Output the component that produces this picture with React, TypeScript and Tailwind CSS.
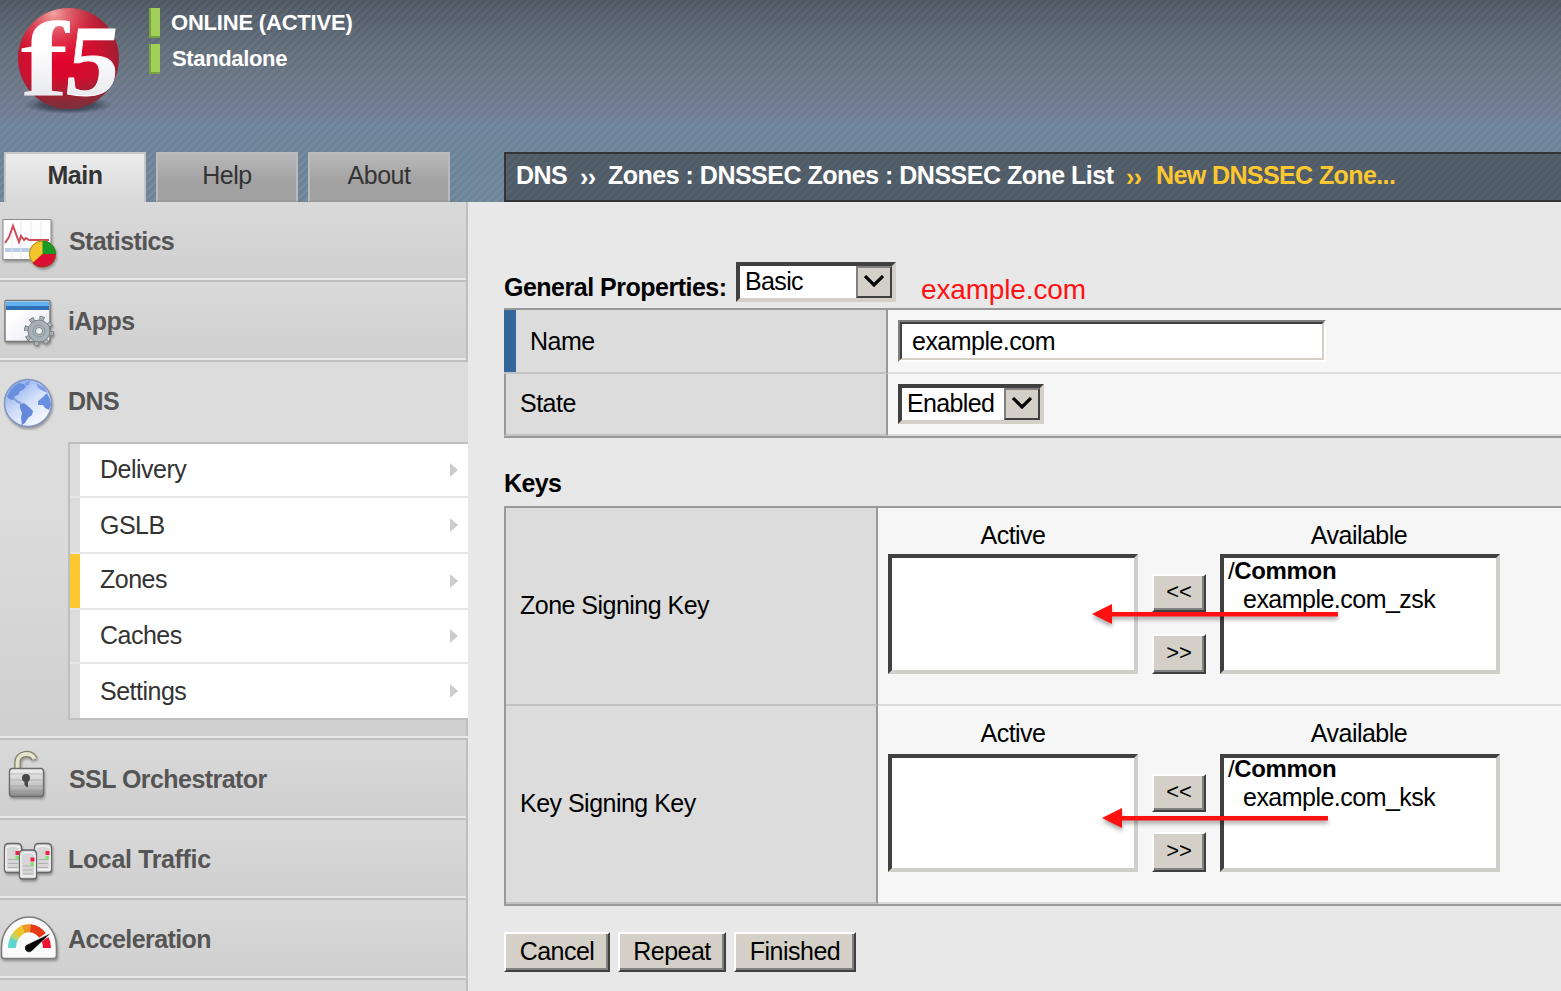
import type { ReactNode } from "react";

const STRIPES =
  "bg-[repeating-linear-gradient(135deg,rgba(255,255,255,0.055)_0px,rgba(255,255,255,0.055)_1.8px,transparent_2.8px,transparent_4.6px,rgba(255,255,255,0.055)_5.657px)]";

function Logo() {
  return (
    <svg className="block h-[120px] w-[140px] shrink-0" viewBox="0 0 140 120">
      <defs>
        <radialGradient id="ball" cx="0.42" cy="0.48" r="0.6">
          <stop offset="0" stopColor="#e4002b" />
          <stop offset="0.6" stopColor="#cf1030" />
          <stop offset="1" stopColor="#9c2233" />
        </radialGradient>
        <radialGradient id="shine" cx="0.35" cy="0.05" r="0.5">
          <stop offset="0" stopColor="#f7b5ad" stopOpacity="0.9" />
          <stop offset="1" stopColor="#e04050" stopOpacity="0" />
        </radialGradient>
        <linearGradient id="base" x1="0" y1="0" x2="0" y2="1">
          <stop offset="0.68" stopColor="#7a3038" stopOpacity="0" />
          <stop offset="1" stopColor="#74333c" stopOpacity="0.9" />
        </linearGradient>
        <linearGradient id="ink" x1="0" y1="0" x2="0" y2="1">
          <stop offset="0.4" stopColor="#ffffff" />
          <stop offset="1" stopColor="#dfe0e6" />
        </linearGradient>
        <radialGradient id="drop">
          <stop offset="0" stopColor="#1d2533" stopOpacity="0.9" />
          <stop offset="0.6" stopColor="#2a3342" stopOpacity="0.6" />
          <stop offset="1" stopColor="#3a4352" stopOpacity="0" />
        </radialGradient>
      </defs>
      <ellipse cx="68" cy="105" rx="45" ry="9" fill="url(#drop)" />
      <circle cx="68.5" cy="58.5" r="50.5" fill="url(#ball)" />
      <circle cx="68.5" cy="58.5" r="50.5" fill="url(#shine)" />
      <circle cx="68.5" cy="58.5" r="50.5" fill="url(#base)" />
      <g fill="url(#ink)" fontFamily="Liberation Serif, serif" fontWeight="700">
        <text transform="translate(20.500 94.5) scale(1.36 1)" fontSize="106">f</text>
        <text transform="translate(62.500 94.5) skewX(-7) scale(1.06 1)" fontSize="101" stroke="#fff" strokeWidth="0.8">5</text>
      </g>
    </svg>
  );
}

function StatisticsIcon() {
  return (
    <>
      <rect x="3" y="17.5" width="48" height="40" fill="#fdfdfe" stroke="#8b8b8b" />
      <path d="M5 48h45" stroke="#b9cde6" strokeWidth="4" />
      <path d="M12 30v26M21 20v36M31 20v36M41 20v36" stroke="#e6e9f3" />
      <path d="M5 41l4-6 4-11 6 16 2-6 3 4 2-2 3 2h20" fill="none" stroke="#cf4b57" strokeWidth="2" />
      <circle cx="42.500" cy="52" r="13.500" fill="#f5c52d" />
      <path d="M42.500 52V38.500a13.500 13.500 0 0 1 13.500 13.500z" fill="#189a25" />
      <path d="M42.500 52H56a13.500 13.500 0 0 1-23.500 9z" fill="#dc0f32" />
      <circle cx="42.500" cy="52" r="13" fill="none" stroke="#5b5b2a" strokeOpacity="0.55" />
    </>
  );
}

function IAppsIcon() {
  return (
    <>
      <defs>
        <linearGradient id="page" x1="0" y1="0" x2="1" y2="1">
          <stop offset="0.3" stopColor="#fff" />
          <stop offset="1" stopColor="#e3e3f2" />
        </linearGradient>
      </defs>
      <rect x="5" y="18.500" width="45" height="41" rx="1" fill="url(#page)" stroke="#777" strokeWidth="1.4" />
      <rect x="6" y="19.500" width="43" height="5" fill="#62b2f0" />
      <rect x="6" y="24" width="43" height="4" fill="#2f6fb5" />
      <circle cx="39" cy="49" r="12.500" fill="none" stroke="#737b80" strokeWidth="5" strokeDasharray="4.8 5.02" />
      <circle cx="39" cy="49" r="12.500" fill="none" stroke="#a9b2b7" strokeWidth="3.400" strokeDasharray="3.4 6.42" strokeDashoffset="-0.700" />
      <circle cx="39" cy="49" r="11" fill="#a9b2b7" stroke="#7b8488" />
      <circle cx="39" cy="49" r="6" fill="none" stroke="#8b959a" />
      <circle cx="39" cy="49" r="3.500" fill="#eef0f2" stroke="#7b8488" />
    </>
  );
}

function GlobeIcon() {
  return (
    <>
      <defs>
        <linearGradient id="sea" x1="0.200" y1="0.100" x2="0.800" y2="0.900">
          <stop offset="0" stopColor="#8fb0ef" />
          <stop offset="0.5" stopColor="#d3e0fa" />
          <stop offset="1" stopColor="#f6faff" />
        </linearGradient>
      </defs>
      <circle cx="28" cy="41" r="23.500" fill="url(#sea)" stroke="#8196c0" strokeWidth="1.5" />
      <path d="M9 31c2-5 6-8 10-10l5 1 2 3-3 3-3 1-2 4-3 1-2 4-4-1-2-3z" fill="#6b8fe0" />
      <path d="M20 42l4-1 5 4 4 4-1 4-4 3-3 5-3 2-1-7 1-5-2-5z" fill="#6489dc" />
      <path d="M25 20l5-1-1 4-4 1zM36 21l8 4 4 6-5-2-5-3z" fill="#7f9fe8" />
      <path d="M38 39l5-4 4-4 3 6 1 6-2 5-4-2-2-3-5 0z" fill="#6b8fe0" />
      <path d="M13 36l5 4 3 1" stroke="#7f9fe3" strokeWidth="2" fill="none" />
    </>
  );
}

function PadlockIcon() {
  return (
    <>
      <defs>
        <linearGradient id="steel" x1="0" y1="0" x2="0" y2="1">
          <stop offset="0" stopColor="#f0f0f0" />
          <stop offset="0.6" stopColor="#c4c4c4" />
          <stop offset="1" stopColor="#858585" />
        </linearGradient>
      </defs>
      <path d="M17.500 29V22c0-9 14-11 17-3" fill="none" stroke="#84836a" strokeWidth="6.500" />
      <path d="M17.500 29V22c0-9 14-11 17-3" fill="none" stroke="#e4e3cd" strokeWidth="4" />
      <rect x="9.500" y="28.500" width="34" height="28" rx="3" fill="url(#steel)" stroke="#6c6c6c" strokeWidth="1.400" />
      <path d="M11 34h31M11 40h31M11 46h31M11 51h31" stroke="#8c8c8c" strokeOpacity="0.45" />
      <circle cx="26" cy="38" r="4" fill="#484848" />
      <path d="M25 38h2.500v9L25 45z" stroke="#484848" fill="#484848" />
    </>
  );
}

function Server({ x, y }: { x: number; y: number }) {
  return (
    <g transform={`translate(${x} ${y})`}>
      <path d="M1 5q0-4 4-4h9q4 0 4 4v22q0 3-3 3H4q-3 0-3-3z" fill="#d6d6d6" stroke="#666" strokeWidth="1.300" />
      <path d="M2.500 5q6-3 14 0M2.500 6v21h14V6" stroke="#f6f6f6" strokeWidth="1.400" fill="none" />
      <path d="M4.500 17h10M4.500 21h10M4.500 25h10" stroke="#b0b0b0" />
      <rect x="12" y="8.500" width="4" height="4" fill="#ee2044" />
      <rect x="12" y="13.500" width="3.500" height="3.500" fill="#7fe36b" />
    </g>
  );
}

function TrafficIcon() {
  return (
    <>
      <Server x={3.5} y={22.5} />
      <Server x={33.5} y={22.5} />
      <Server x={18.5} y={29} />
    </>
  );
}

function GaugeIcon() {
  return (
    <>
      <path d="M1.500 47a27.500 30 0 0 1 55 0v9q0 2.500-3 2.500H4.500q-3 0-3-2.500z" fill="#fafafa" stroke="#7d7d7d" strokeWidth="1.600" />
      <g fill="none" strokeWidth="8">
        <path d="M12 48a17.800 19 0 0 1 3-11" stroke="#5fd6cf" />
        <path d="M13.800 39a17.800 19 0 0 1 4-5.500" stroke="#c3d267" />
        <path d="M16.500 35a17.800 19 0 0 1 8-6.200" stroke="#edc62b" />
        <path d="M23.500 29.200a17.800 19 0 0 1 8-.7" stroke="#ee962b" />
        <path d="M30.500 28.300a17.800 19 0 0 1 12 7.200" stroke="#e93818" />
        <path d="M45 39a17.800 19 0 0 1 2 9" stroke="#ed1533" />
      </g>
      <path d="M51 33L26 45a4 4 0 1 0 6 6z" fill="#050505" stroke="#fff" strokeWidth="0.500" />
    </>
  );
}

interface MenuProps {
  icon: ReactNode;
  label: string;
  text?: string;
}

function MenuHead({ icon, label, text = "tracking-[-0.6px]" }: MenuProps) {
  return (
    <div className="flex h-[76px]">
      <svg className="h-[76px] w-[68px] shrink-0 drop-shadow-[1px_2px_1px_rgba(0,0,0,0.3)]" viewBox="0 0 68 76">
        {icon}
      </svg>
      <span className={`pt-[25px] text-[25px] leading-7 font-bold text-[#555] ${text}`}>{label}</span>
    </div>
  );
}

function MenuItem(props: MenuProps) {
  return (
    <div className="border-r-2 border-[#bfbfbf] bg-linear-to-b from-[#d9d9d9] to-[#cfcfcf]">
      <MenuHead {...props} />
      <div className="h-1 border-t-2 border-b-2 border-t-[#e8e8e8] border-b-[#bfbfbf]" />
    </div>
  );
}

const SUBMENU = [
  { label: "Delivery", size: "h-[54px]", pad: "pt-[11px]", bar: "bg-[#dcdcdc]", edge: "border-b-2" },
  { label: "GSLB", size: "h-[56px]", pad: "pt-[13px]", bar: "bg-[#dcdcdc]", edge: "border-b-2" },
  { label: "Zones", size: "h-[56px]", pad: "pt-[11px]", bar: "bg-[#fdc82f]", edge: "border-b-2" },
  { label: "Caches", size: "h-[54px]", pad: "pt-[11px]", bar: "bg-[#dcdcdc]", edge: "border-b-2" },
  { label: "Settings", size: "h-[54px]", pad: "pt-[13px]", bar: "bg-[#dcdcdc]", edge: "" },
];

function Sidebar() {
  return (
    <aside className="h-[789px] w-[468px] shrink-0 overflow-hidden">
      <MenuItem icon={<StatisticsIcon />} label="Statistics" text="pl-px tracking-[-0.6px]" />
      <MenuItem icon={<IAppsIcon />} label="iApps" />
      <div className="flex h-[378px] flex-col bg-linear-to-b from-[#dcdcdc] from-40% to-[#cfcfcf]">
        <MenuHead icon={<GlobeIcon />} label="DNS" />
        <ul className="mt-1 ml-[68px] border-y-2 border-l-2 border-[#bfbfbf] bg-white">
          {SUBMENU.map((s) => (
            <li key={s.label} className={`flex border-[#e6e6e6] ${s.size} ${s.edge}`}>
              <span className={`w-[10px] ${s.bar}`} />
              <span className={`grow pl-5 text-[25px] leading-7 tracking-[-0.5px] text-[#333] ${s.pad}`}>{s.label}</span>
              <svg className="mr-[10px] h-[14px] w-2 self-center" viewBox="0 0 8 14">
                <path d="M0 0l8 7-8 7z" fill="#ccc" />
              </svg>
            </li>
          ))}
        </ul>
        <div className="grow border-r-2 border-[#bfbfbf]" />
        <div className="h-1 border-t-2 border-b-2 border-t-[#e8e8e8] border-b-[#bfbfbf]" />
      </div>
      <MenuItem icon={<PadlockIcon />} label="SSL Orchestrator" text="pl-px tracking-[-0.55px]" />
      <MenuItem icon={<TrafficIcon />} label="Local Traffic" text="tracking-[-0.35px]" />
      <MenuItem icon={<GaugeIcon />} label="Acceleration" />
      <div className="h-4 border-r-2 border-[#bfbfbf] bg-[#d8d8d8]" />
    </aside>
  );
}

function Header() {
  return (
    <header className="h-[202px] bg-[linear-gradient(#4c5762_0px,#5e6976_40px,#6a7585_80px,#707b93_112px,#6b8398_126px,#6d8498_202px)]">
      <div className={`flex h-full flex-col ${STRIPES}`}>
        <div className="flex h-[152px]">
          <Logo />
          <div className="flex flex-col gap-[6px] pt-2 pl-[9px] text-[22px] leading-[30px] font-bold tracking-[-0.2px] text-white">
            <div className="flex h-[30px]">
              <span className="mr-[11px] w-[11px] border-b-2 border-l-2 border-[#78a044] bg-[#a1cf58]" />
              <span>ONLINE (ACTIVE)</span>
            </div>
            <div className="flex h-[30px]">
              <span className="mr-3 w-[11px] border-b-2 border-l-2 border-[#78a044] bg-[#a1cf58]" />
              <span className="tracking-[-0.35px]">Standalone</span>
            </div>
          </div>
        </div>
        <div className="flex h-[50px] pl-1">
          <nav className="flex w-[500px] gap-[10px] text-center text-[25px] leading-7 tracking-[-0.5px] text-[#333]">
            <div className="w-[142px] border-2 border-b-0 border-[#c4c6c8] bg-linear-to-b from-[#ececec] to-[#d9d9d9] pt-[7px] font-bold">Main</div>
            <div className="w-[142px] border-2 border-[#bbb] border-b-[#999] bg-linear-to-b from-[#b8b8b8] to-[#a2a2a2] to-60% pt-[7px]">Help</div>
            <div className="w-[142px] border-2 border-[#bbb] border-b-[#999] bg-linear-to-b from-[#b8b8b8] to-[#a2a2a2] to-60% pt-[7px]">About</div>
          </nav>
          <div className="grow border-2 border-r-0 border-[#333] bg-[#4f5b66]">
            <div className="flex h-full pt-[7px] pl-[10px] text-[25px] leading-7 font-bold tracking-[-0.5px] whitespace-pre text-white bg-[repeating-linear-gradient(135deg,rgba(255,255,255,0.03)_0px,rgba(255,255,255,0.03)_2.2px,transparent_3.2px,transparent_5.657px)]">
              <span className="w-[64px]">DNS</span>
              <span className="w-[28px] pt-[2px]">››</span>
              <span className="w-[518px]">Zones : DNSSEC Zones : DNSSEC Zone List</span>
              <span className="w-[30px] pt-[2px] text-[#fdc82f]">››</span>
              <span className="tracking-[-0.6px] text-[#fdc82f]">New DNSSEC Zone...</span>
            </div>
          </div>
        </div>
      </div>
    </header>
  );
}

function Select({ value, size }: { value: string; size: string }) {
  return (
    <div className={`flex h-10 shrink-0 border-4 border-t-[#404040] border-r-[#d4d0c8] border-b-[#d4d0c8] border-l-[#404040] bg-white ${size}`}>
      <span className="grow pt-px pl-[5px] leading-7 tracking-[-0.65px]">{value}</span>
      <span className="flex w-9 shrink-0 items-center justify-center border-2 border-t-[#808080] border-r-[#404040] border-b-[#404040] border-l-[#808080] bg-[#d4d0c8]">
        <svg className="-mt-[2px] h-3 w-5" viewBox="0 0 20 12">
          <path d="M1 1l9 9 9-9" fill="none" stroke="#000" strokeWidth="3.200" />
        </svg>
      </span>
    </div>
  );
}

function Button({ label, size }: { label: string; size: string }) {
  return (
    <button className={`border-2 border-t-white border-r-[#404040] border-b-[#404040] border-l-white bg-[#d4d0c8] ${size}`}>
      <span className="flex h-full items-center justify-center border-r-2 border-b-2 border-[#808080] pl-[2px]">{label}</span>
    </button>
  );
}

function ListBox({ size, children }: { size: string; children?: ReactNode }) {
  return (
    <div className={`border-4 border-t-[#404040] border-r-[#d0cec9] border-b-[#d0cec9] border-l-[#404040] bg-white ${size}`}>
      {children}
    </div>
  );
}

function Arrow({ length, place }: { length: number; place: string }) {
  return (
    <svg className={`absolute h-7 w-[260px] drop-shadow-[0_3px_2px_rgba(0,0,0,0.35)] ${place}`} viewBox="0 0 260 28">
      <path d={`M0 11L20 1v8H${length}v4.500H20V21z`} fill="#ff1111" />
    </svg>
  );
}

interface KeyRowProps {
  label: string;
  item: string;
  gap: string;
  box: string;
  lines: string;
  between: string;
  arrow: ReactNode;
}

function KeyRow({ label, item, gap, box, lines, between, arrow }: KeyRowProps) {
  return (
    <div className="flex h-[198px]">
      <div className="w-[372px] shrink-0 border-r-2 border-b-2 border-r-[#999] border-b-[#c2c2c2] bg-[#dcdcdc] pt-[83px] pl-[14px]">{label}</div>
      <div className="relative flex grow border-b-2 border-[#dcdcdc] bg-[#f6f6f6] pt-[13px] pl-[10px]">
        <div className={`flex w-[250px] flex-col ${gap}`}>
          <span className="text-center">Active</span>
          <ListBox size={box} />
        </div>
        <div className={`ml-[14px] flex w-[54px] flex-col pt-[53px] text-[22px] leading-6 tracking-normal ${between}`}>
          <Button label="<<" size="h-[38px] w-[54px]" />
          <Button label=">>" size="h-10 w-[54px]" />
        </div>
        <div className={`ml-[14px] flex w-[280px] flex-col ${gap}`}>
          <span className="pr-[2px] text-center">Available</span>
          <ListBox size={box}>
            <div className={`pl-1 ${lines}`}>
              <div className="text-[24px] font-bold tracking-[-0.35px]"><span className="font-normal">/</span>Common</div>
              <div className="pl-[15px]">{item}</div>
            </div>
          </ListBox>
        </div>
        {arrow}
      </div>
    </div>
  );
}

function Content() {
  return (
    <main className="grow overflow-hidden bg-[#e8e8e8] pl-9 text-[25px] leading-7 tracking-[-0.52px] whitespace-nowrap text-black">
      <div className="flex h-[106px]">
        <h2 className="w-[232px] pt-[71px] font-bold tracking-[-0.5px]">General Properties:</h2>
        <div className="pt-[60px]"><Select value="Basic" size="w-40" /></div>
        <span className="pt-[74px] pl-[25px] text-[28px] tracking-[-0.15px] text-[#ff1111]">example.com</span>
      </div>

      <section className="border-t-2 border-b-2 border-[#999]">
        <div className="flex h-16">
          <div className="w-[384px] shrink-0 border-r-2 border-b-2 border-r-[#999] border-b-[#c2c2c2] bg-[#dcdcdc]">
            <div className="h-[62px] border-l-12 border-[#336699] pt-[17px] pl-[14px]">Name</div>
          </div>
          <div className="grow border-b-2 border-[#dcdcdc] bg-[#f6f6f6] pt-[10px] pl-[10px]">
            <div className="h-[42px] w-[428px] border-2 border-t-[#808080] border-r-white border-b-white border-l-[#808080]">
              <div className="h-full border-2 border-t-[#404040] border-r-[#d4d0c8] border-b-[#d4d0c8] border-l-[#404040] bg-white pt-[3px] pl-[10px]">example.com</div>
            </div>
          </div>
        </div>
        <div className="flex h-[62px]">
          <div className="w-[384px] shrink-0 border-r-2 border-b-2 border-l-2 border-r-[#999] border-b-[#c2c2c2] border-l-[#999] bg-[#dcdcdc] pt-[15px] pl-[14px]">State</div>
          <div className="grow border-b-2 border-[#dcdcdc] bg-[#f6f6f6] pt-[10px] pl-[10px]">
            <Select value="Enabled" size="w-[146px]" />
          </div>
        </div>
      </section>

      <h2 className="h-[68px] pt-[31px] font-bold tracking-[-0.6px]">Keys</h2>

      <section className="border-t-2 border-b-2 border-l-2 border-[#999]">
        <KeyRow
          label="Zone Signing Key"
          item="example.com_zsk"
          gap="gap-[5px]"
          box="h-[120px]"
          lines="-mt-px"
          between="gap-[22px]"
          arrow={<Arrow length={246} place="top-[95px] left-[214px]" />}
        />
        <KeyRow
          label="Key Signing Key"
          item="example.com_ksk"
          gap="gap-[7px]"
          box="h-[118px]"
          lines="-mt-[3px]"
          between="mt-[2px] gap-5"
          arrow={<Arrow length={226} place="top-[101px] left-[224px]" />}
        />
      </section>

      <div className="flex gap-2 pt-[26px]">
        <Button label="Cancel" size="h-10 w-[106px]" />
        <Button label="Repeat" size="h-10 w-[108px]" />
        <Button label="Finished" size="h-10 w-[122px]" />
      </div>
    </main>
  );
}

export default function App() {
  return (
    <div className="h-[991px] w-[1561px] overflow-hidden bg-[#e8e8e8] font-['Liberation_Sans',Arial,sans-serif]">
      <Header />
      <div className="flex">
        <Sidebar />
        <Content />
      </div>
    </div>
  );
}
